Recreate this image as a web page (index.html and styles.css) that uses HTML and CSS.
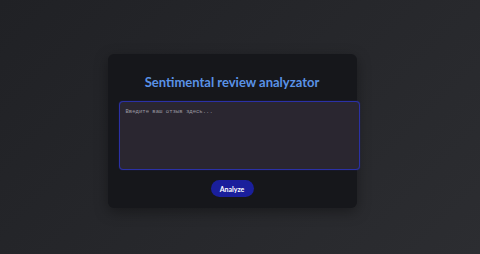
FILE: index.html
```html
<!DOCTYPE html>
<html lang="ru">

<head>
    <meta charset="UTF-8">
    <meta name="viewport" content="width=device-width, initial-scale=1.0">
    <title>Sentimental review analyzator</title>
    <link rel="stylesheet" href="styles.css">
</head>

<body>
    <div class="container">
        <h1>Sentimental review analyzator</h1>
        <textarea id="review" placeholder="Введите ваш отзыв здесь..."></textarea>
        <div class="actions">
            <button>Analyze</button>
        </div>
    </div>
</body>

</html>
```

FILE: styles.css
```css
body {
    font-family: 'Lato', sans-serif;
    margin: 0;
    padding: 0;
    height: 254px;
    background: linear-gradient(135deg, #202125 0%, #26272b 50%, #2c2d31 100%);
    display: flex;
    justify-content: center;
    align-items: center;
    overflow: hidden;
}

.container {
    width: 227px;
    padding: 11px;
    margin: 8px 16px 0 0;
    background-color: #16171b;
    border-radius: 6px;
    box-shadow: 0 4px 14px rgba(0, 0, 0, 0.35);
}

.container h1 {
    margin: 7px 0 9px;
    font-size: 13px;
    line-height: 20px;
    font-weight: 700;
    text-align: center;
    color: #5a92e6;
}

textarea {
    display: block;
    width: 100%;
    height: 55px;
    padding: 6px;
    margin: 0;
    border: 1px solid #2b31a6;
    border-radius: 4px;
    box-shadow: 0 0 1px #2b31a6;
    background-color: #2a2630;
    color: #ddd;
    font-family: 'Liberation Mono', monospace;
    font-size: 5.6px;
    resize: none;
    outline: none;
}

textarea::placeholder {
    color: #9a98a0;
}

.actions {
    display: flex;
    justify-content: center;
    margin-top: 10px;
}

.actions button {
    width: 43px;
    height: 17px;
    padding: 0;
    border: none;
    border-radius: 9px;
    background-color: #1a1f9c;
    color: #fff;
    font-family: 'Lato', sans-serif;
    font-size: 7px;
    font-weight: 700;
    cursor: pointer;
}
```
